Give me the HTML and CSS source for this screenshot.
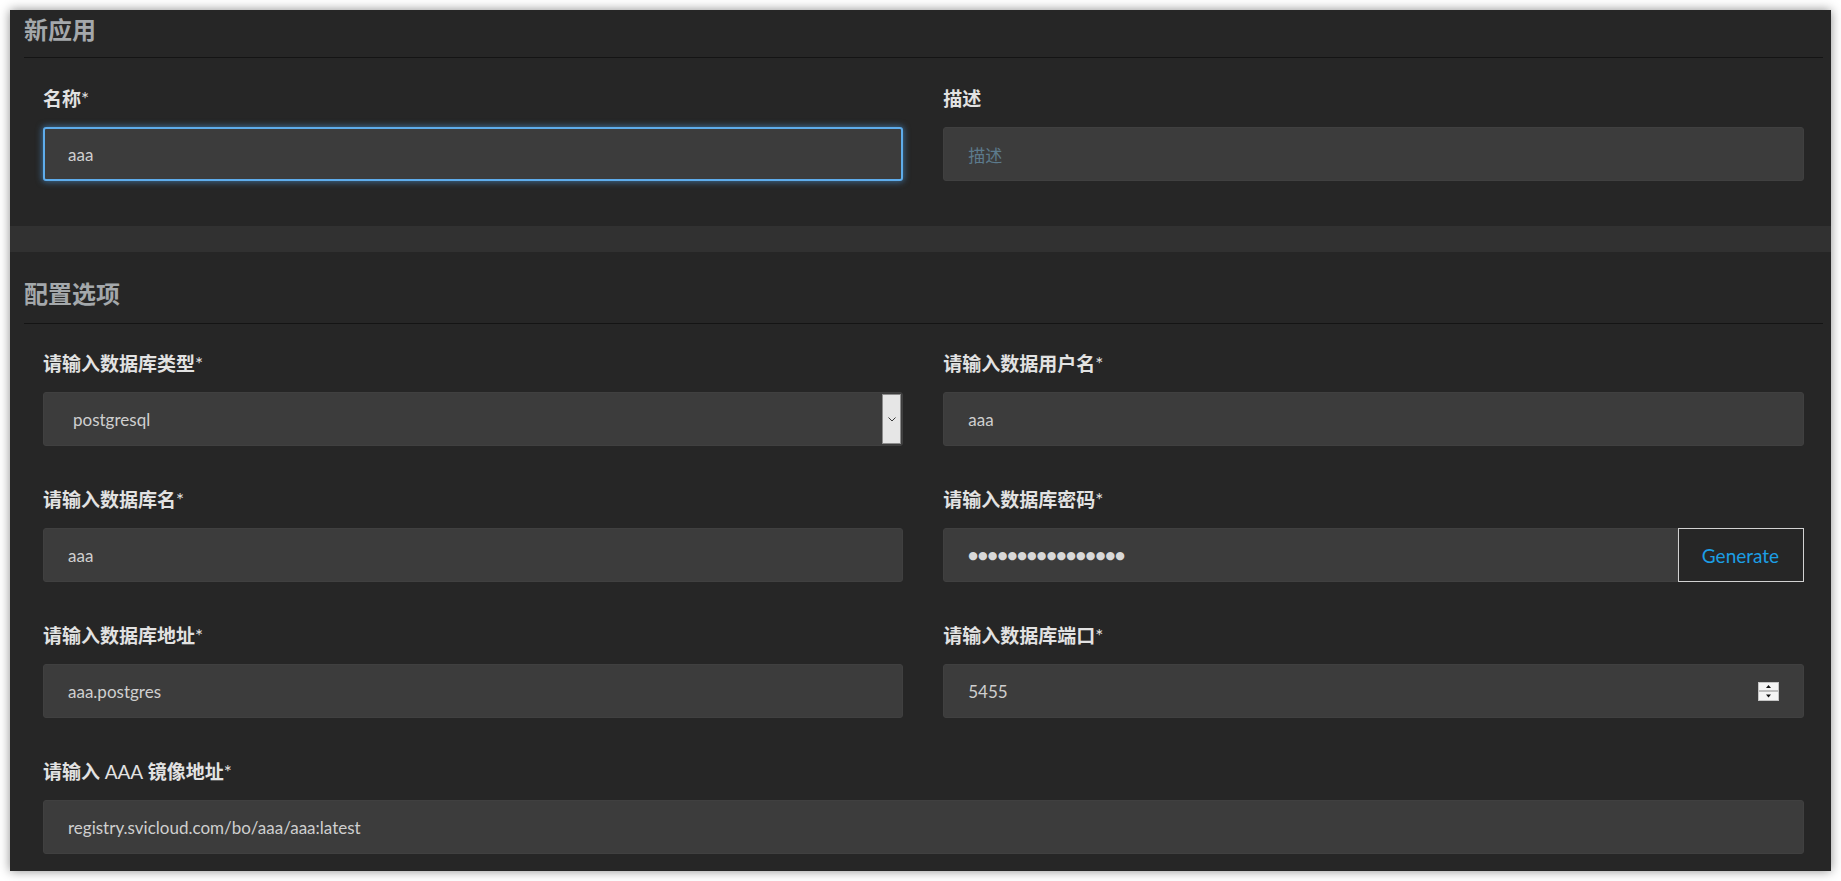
FILE: index.html
```html
<!DOCTYPE html>
<html lang="zh-CN">
<head>
<meta charset="utf-8">
<title>新应用</title>
<link rel="stylesheet" href="styles.css">
</head>
<body>
<div class="panel">
  <section class="card card-first">
    <h2 class="card-title">新应用</h2>
    <div class="form-grid">
      <div class="field">
        <label class="field-label">名称<span class="req">*</span></label>
        <div class="control is-focused">aaa</div>
      </div>
      <div class="field">
        <label class="field-label">描述</label>
        <div class="control is-placeholder">描述</div>
      </div>
    </div>
  </section>

  <section class="card card-second">
    <h2 class="card-title">配置选项</h2>
    <div class="form-grid">
      <div class="field">
        <label class="field-label">请输入数据库类型<span class="req">*</span></label>
        <div class="control select">
          <span class="select-value">postgresql</span>
          <span class="select-arrow">
            <svg width="8" height="5" viewBox="0 0 8 5"><polyline points="0.5,0.5 4,4 7.5,0.5" fill="none" stroke="#3a3a3a" stroke-width="1"/></svg>
          </span>
        </div>
      </div>
      <div class="field">
        <label class="field-label">请输入数据用户名<span class="req">*</span></label>
        <div class="control">aaa</div>
      </div>

      <div class="field">
        <label class="field-label">请输入数据库名<span class="req">*</span></label>
        <div class="control">aaa</div>
      </div>
      <div class="field">
        <label class="field-label">请输入数据库密码<span class="req">*</span></label>
        <div class="input-group">
          <div class="control control-grouped password">●●●●●●●●●●●●●●●●</div>
          <button class="btn-generate" type="button">Generate</button>
        </div>
      </div>

      <div class="field">
        <label class="field-label">请输入数据库地址<span class="req">*</span></label>
        <div class="control">aaa.postgres</div>
      </div>
      <div class="field">
        <label class="field-label">请输入数据库端口<span class="req">*</span></label>
        <div class="control number">
          <span class="number-value">5455</span>
          <svg class="spin" width="21" height="19" viewBox="0 0 21 19">
            <rect x="0.5" y="0.5" width="20" height="18" fill="#f4f4f4" stroke="#c4c4c4"/>
            <rect x="1" y="8" width="19" height="2" fill="#bdbdbd"/>
            <polygon points="10.5,3 13,6 8,6" fill="#111"/>
            <polygon points="8,12.5 13,12.5 10.5,15.5" fill="#111"/>
          </svg>
        </div>
      </div>

      <div class="field field-wide">
        <label class="field-label">请输入 <span class="latin">AAA</span> 镜像地址<span class="req">*</span></label>
        <div class="control">registry.svicloud.com/bo/aaa/aaa:latest</div>
      </div>
    </div>
  </section>
</div>
</body>
</html>
```

FILE: styles.css
```css
html, body {
  margin: 0;
  background: #ffffff;
}

body {
  padding: 10px;
  font-family: Lato, "Noto Sans CJK SC", sans-serif;
}

.panel {
  display: flex;
  flex-direction: column;
  gap: 26px;
  background: #313131;
  box-shadow: 0 0 10px rgba(0, 0, 0, 0.45);
}

.card {
  background: #262626;
  padding: 0 8px 0 14px;
}

.card-title {
  margin: 0;
  font-size: 24px;
  line-height: 32px;
  font-weight: bold;
  color: #a4a8ab;
  border-bottom: 1px solid #141414;
}

.card-first .card-title {
  padding: 4px 0 11px;
}

.card-second .card-title {
  padding: 26px 0 13px;
}

.form-grid {
  display: grid;
  grid-template-columns: 1fr 1fr;
  column-gap: 40px;
  row-gap: 41px;
  padding: 28px 19.5px 45px 19px;
}

.card-second .form-grid {
  padding: 27px 19.5px 17px 19px;
}

.field-wide {
  grid-column: 1 / -1;
}

.field-label {
  display: block;
  margin-bottom: 15px;
  font-size: 19px;
  line-height: 26px;
  font-weight: bold;
  color: #e2e2e2;
}

.req,
.latin {
  font-weight: normal;
}

.control {
  box-sizing: border-box;
  display: flex;
  align-items: center;
  height: 54px;
  padding: 0 24px;
  background: #3c3c3c;
  border: 1px solid #404040;
  border-radius: 3px;
  font-size: 17px;
  color: #cfcfcf;
}

.control.is-focused {
  border: 2px solid #5eaceb;
  padding-left: 23px;
  box-shadow: 0 0 6px 1px rgba(80, 160, 230, 0.55);
}

.control.is-placeholder {
  color: #5c7b8d;
}

.select {
  padding: 1px 1px 1px 29px;
}

.select-value {
  flex: 1;
}

.select-arrow {
  display: flex;
  align-items: center;
  justify-content: center;
  align-self: stretch;
  width: 17px;
  background: #e6e6e6;
  border: 1px solid #8c8c8c;
}

.number-value {
  flex: 1;
}

.spin {
  display: block;
  margin-top: 1px;
}

.input-group {
  display: flex;
  height: 54px;
}

.control-grouped {
  flex: 1;
  border-radius: 3px 0 0 3px;
}

.password {
  font-family: "DejaVu Sans", sans-serif;
  font-size: 11px;
  letter-spacing: 0.2px;
  color: #d8d8d8;
}

.btn-generate {
  box-sizing: border-box;
  width: 126px;
  height: 54px;
  margin: 0;
  padding: 0;
  background: #262626;
  border: 1px solid #d2d2d2;
  border-radius: 0;
  font-family: Lato, sans-serif;
  font-size: 19px;
  color: #1c9ee4;
}
```
